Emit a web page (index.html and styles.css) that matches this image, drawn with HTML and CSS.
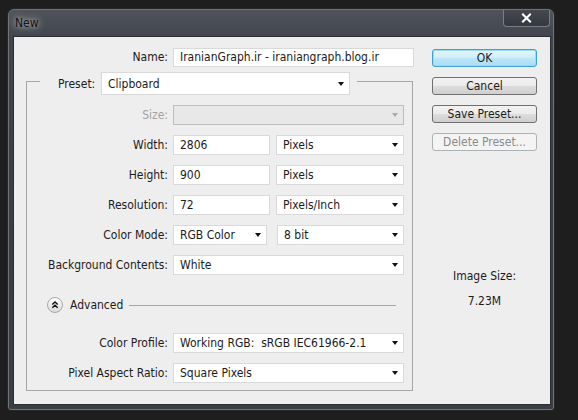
FILE: index.html
```html
<!DOCTYPE html>
<html>
<head>
<meta charset="utf-8">
<title>New</title>
<link rel="stylesheet" href="styles.css">
</head>
<body>
<div class="window">
  <div class="titlebar">
    <span class="title">New</span>
    <div class="close">
      <svg width="11" height="10" viewBox="0 0 11 10"><path d="M2 1.5 L9 8.5 M9 1.5 L2 8.5" stroke="#2a2d31" stroke-width="3.4" stroke-linecap="square" fill="none" opacity="0.6"/><path d="M2 1.5 L9 8.5 M9 1.5 L2 8.5" stroke="#ffffff" stroke-width="2.2" stroke-linecap="square" fill="none"/></svg>
    </div>
  </div>
  <div class="client">
    <div class="main">
      <div class="name-row">
        <span class="lbl">Name:</span>
        <div class="field name-field">IranianGraph.ir - iraniangraph.blog.ir</div>
      </div>
      <fieldset class="group">
        <legend class="legend">
          <span class="preset-lbl">Preset:</span>
          <div class="field select preset-select"><span>Clipboard</span><span class="arrow"></span></div>
        </legend>
        <div class="row first">
          <span class="lbl disabled">Size:</span>
          <div class="field select disabled-field w-full"><span></span><span class="arrow grey"></span></div>
        </div>
        <div class="row">
          <span class="lbl">Width:</span>
          <div class="field w-num">2806</div>
          <div class="field select w-unit"><span>Pixels</span><span class="arrow"></span></div>
        </div>
        <div class="row">
          <span class="lbl">Height:</span>
          <div class="field w-num">900</div>
          <div class="field select w-unit"><span>Pixels</span><span class="arrow"></span></div>
        </div>
        <div class="row">
          <span class="lbl">Resolution:</span>
          <div class="field w-num">72</div>
          <div class="field select w-unit"><span>Pixels/Inch</span><span class="arrow"></span></div>
        </div>
        <div class="row">
          <span class="lbl">Color Mode:</span>
          <div class="field select w-mode"><span>RGB Color</span><span class="arrow"></span></div>
          <div class="field select w-bit"><span>8 bit</span><span class="arrow"></span></div>
        </div>
        <div class="row">
          <span class="lbl">Background Contents:</span>
          <div class="field select w-full"><span>White</span><span class="arrow"></span></div>
        </div>
        <div class="adv-row">
          <svg class="adv-icon" width="16" height="16" viewBox="0 0 16 16"><defs><linearGradient id="ag" x1="0" y1="0" x2="0" y2="1"><stop offset="0" stop-color="#ffffff"/><stop offset="1" stop-color="#d9d9d9"/></linearGradient></defs><circle cx="8" cy="8" r="7.5" fill="url(#ag)" stroke="#a8a8a8"/><path d="M5.3 7.6 L8 5 L10.7 7.6 M5.3 10.8 L8 8.2 L10.7 10.8" fill="none" stroke="#111" stroke-width="1.4"/></svg>
          <span class="adv-text">Advanced</span>
          <span class="adv-line"></span>
        </div>
        <div class="row second">
          <span class="lbl">Color Profile:</span>
          <div class="field select w-full"><span>Working RGB:  sRGB IEC61966-2.1</span><span class="arrow"></span></div>
        </div>
        <div class="row">
          <span class="lbl">Pixel Aspect Ratio:</span>
          <div class="field select w-full"><span>Square Pixels</span><span class="arrow"></span></div>
        </div>
      </fieldset>
    </div>
    <div class="side">
      <div class="btn ok">OK</div>
      <div class="btn">Cancel</div>
      <div class="btn">Save Preset...</div>
      <div class="btn off">Delete Preset...</div>
      <div class="img-lbl">Image Size:</div>
      <div class="img-val">7.23M</div>
    </div>
  </div>
</div>
</body>
</html>
```

FILE: styles.css
```css
html, body {
  margin: 0;
  padding: 0;
}
body {
  background: #1e1e1e;
  font-family: "DejaVu Sans Condensed", "DejaVu Sans", sans-serif;
  font-stretch: condensed;
  font-size: 12px;
  color: #1b1b1b;
  width: 578px;
  height: 420px;
  overflow: hidden;
  padding-top: 9px;
  box-sizing: border-box;
}
.window {
  box-sizing: border-box;
  width: 546px;
  height: 401px;
  margin-left: 8px;
  border: 1px solid #6f7378;
  border-radius: 6px 6px 3px 3px;
  background: linear-gradient(180deg, #4f545a 0%, #41464c 7%, #3a3f45 40%, #393e44 100%);
  padding: 0 2px 4px 4px;
  box-shadow: 0 0 0 1px #262626;
  display: flex;
  flex-direction: column;
}
.titlebar {
  height: 26px;
  display: flex;
  justify-content: space-between;
  align-items: flex-start;
  flex: none;
}
.title {
  line-height: 26px;
  padding-left: 2px;
  color: #121212;
  font-size: 12px;
  text-shadow: 0 0 5px rgba(255,255,255,0.55), 0 0 9px rgba(255,255,255,0.45), 0 0 14px rgba(255,255,255,0.3);
}
.close {
  box-sizing: border-box;
  width: 47px;
  height: 17px;
  margin-right: 1px;
  border: 1px solid #7b7f85;
  border-top: none;
  border-radius: 0 0 4px 4px;
  background: linear-gradient(180deg, #444950, #35393e);
  display: flex;
  align-items: center;
  justify-content: center;
}
.client {
  box-sizing: border-box;
  height: 369px;
  border: 1px solid #2b2f34;
  background: #eeeeee;
  display: flex;
  flex: none;
}
.main {
  width: 399px;
  padding-top: 11px;
  flex: none;
}
.name-row {
  display: flex;
  height: 19px;
}
.lbl {
  width: 154px;
  margin-right: 5px;
  text-align: right;
  white-space: nowrap;
  flex: none;
}
.name-row .lbl {
  line-height: 19px;
}
.field {
  box-sizing: border-box;
  background: #ffffff;
  border: 1px solid #d9d9d9;
  padding-left: 6px;
  white-space: pre;
  flex: none;
}
.name-field {
  width: 241px;
  height: 19px;
  line-height: 17px;
}
.select {
  display: flex;
  justify-content: space-between;
  align-items: center;
  padding-right: 5px;
}
.arrow {
  width: 0;
  height: 0;
  border-left: 3px solid transparent;
  border-right: 3px solid transparent;
  border-top: 4px solid #111111;
}
.arrow.grey {
  border-top-color: #aaaaaa;
}
.group {
  margin: 0 0 0 12px;
  padding: 0 0 7px 0;
  width: 387px;
  box-sizing: border-box;
  min-width: 0;
  border: 1px solid #a6a6a6;
}
.legend {
  box-sizing: border-box;
  width: 317px;
  margin-left: 13px;
  padding: 5px 7px 0 18px;
  display: flex;
  justify-content: flex-end;
  align-items: center;
  gap: 4px;
}
.preset-lbl {
  flex: 1;
  white-space: nowrap;
}
.preset-select {
  width: 249px;
  height: 23px;
}
.row {
  display: flex;
  align-items: center;
  height: 20px;
  margin-top: 10px;
}
.row .lbl {
  width: 141px;
  line-height: 20px;
}
.row .field {
  height: 20px;
  line-height: 18px;
}
.row.first {
  margin-top: 10px;
}
.row.second {
  margin-top: 20px;
}
.lbl.disabled {
  color: #a3a3a3;
}
.disabled-field {
  background: #e8e8e8;
  border-color: #bdbdbd;
}
.w-full { width: 231px; }
.w-num { width: 97px; }
.w-unit { width: 128px; margin-left: 6px; }
.w-mode { width: 94px; }
.w-bit { width: 127px; margin-left: 10px; }
.adv-row {
  display: flex;
  align-items: center;
  height: 16px;
  margin-top: 22px;
}
.adv-icon {
  margin-left: 20px;
  flex: none;
}
.adv-text {
  margin-left: 7px;
}
.adv-line {
  flex: 1;
  height: 1px;
  background: #a6a6a6;
  margin-left: 6px;
  margin-right: 16px;
}
.side {
  width: 105px;
  margin-left: 19px;
  padding-top: 12px;
  display: flex;
  flex-direction: column;
  flex: none;
}
.btn {
  box-sizing: border-box;
  height: 18px;
  margin-bottom: 10px;
  border: 1px solid #707070;
  border-radius: 3px;
  background: linear-gradient(180deg, #f2f2f2 0%, #ebebeb 50%, #dddddd 51%, #cfcfcf 100%);
  text-align: center;
  line-height: 16px;
  white-space: nowrap;
}
.btn.ok {
  border-color: #3c9fd6;
  background: linear-gradient(180deg, #e6f6fd 0%, #cdeefb 50%, #bde6f8 51%, #aadcf3 100%);
  box-shadow: inset 0 0 0 1px #9bdcf6;
}
.btn.off {
  border-color: #adb2b5;
  background: #f4f4f4;
  color: #8a8a8a;
}
.img-lbl {
  margin-top: 107px;
  line-height: 16px;
  text-align: center;
}
.img-val {
  margin-top: 9px;
  line-height: 16px;
  text-align: center;
}
```
